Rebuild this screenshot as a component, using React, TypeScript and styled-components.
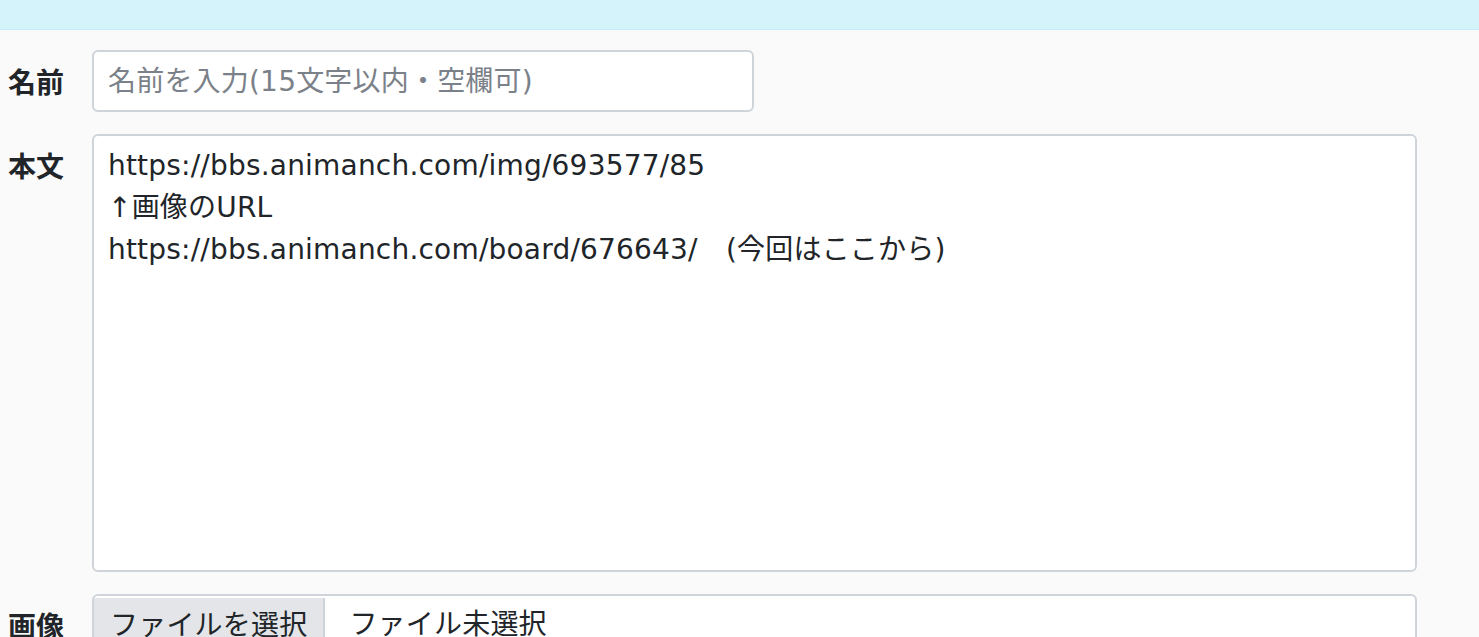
import React from 'react';
import styled, { createGlobalStyle } from 'styled-components';

const GlobalStyle = createGlobalStyle`
  html, body {
    margin: 0;
    padding: 0;
    background: #fafafa;
  }
  body {
    font-family: "DejaVu Sans", "Noto Sans CJK JP", sans-serif;
    color: #212529;
  }
`;

const TopBar = styled.div`
  height: 29px;
  background: #d5f3fb;
  border-bottom: 1px solid #c3edf8;
`;

const Form = styled.form`
  display: flex;
  flex-direction: column;
  gap: 22px;
  padding: 20px 62px 0 8px;
`;

const Row = styled.div`
  display: flex;
  align-items: flex-start;
`;

const Label = styled.label`
  width: 84px;
  flex-shrink: 0;
  padding-top: 10px;
  font-family: "Noto Sans CJK JP", sans-serif;
  font-size: 28px;
  line-height: 42px;
  font-weight: bold;
  color: #212529;
`;

const fieldBase = `
  box-sizing: border-box;
  border: 2px solid #ced4da;
  border-radius: 6px;
  background: #fff;
  font-family: "DejaVu Sans", "Noto Sans CJK JP", sans-serif;
  font-size: 28px;
  line-height: 42px;
  letter-spacing: 0.2px;
  color: #212529;
  outline: none;
`;

const TextInput = styled.input`
  ${fieldBase}
  width: 662px;
  height: 62px;
  padding: 8px 14px;

  &::placeholder {
    color: #7b8188;
  }
`;

const TextArea = styled.textarea`
  ${fieldBase}
  flex: 1;
  height: 438px;
  padding: 9px 14px;
  resize: none;
  display: block;
`;

const FileBox = styled.div`
  ${fieldBase}
  flex: 1;
  height: 62px;
  display: flex;
  align-items: stretch;
  overflow: hidden;
  white-space: nowrap;
`;

const FileButton = styled.span`
  display: flex;
  align-items: center;
  padding: 0 16px;
  margin-top: 2px;
  background: #e3e5e8;
  border-right: 2px solid #ced4da;
`;

const FileName = styled.span`
  display: flex;
  align-items: center;
  padding-left: 24px;
`;

const body = `https://bbs.animanch.com/img/693577/85
↑画像のURL
https://bbs.animanch.com/board/676643/　(今回はここから)`;

const App: React.FC = () => {
  return (
    <>
      <GlobalStyle />
      <TopBar />
      <Form>
        <Row>
          <Label>名前</Label>
          <TextInput type='text' placeholder='名前を入力(15文字以内・空欄可)' />
        </Row>
        <Row>
          <Label>本文</Label>
          <TextArea readOnly value={body} />
        </Row>
        <Row>
          <Label>画像</Label>
          <FileBox>
            <FileButton>ファイルを選択</FileButton>
            <FileName>ファイル未選択</FileName>
          </FileBox>
        </Row>
      </Form>
    </>
  );
};

export default App;
